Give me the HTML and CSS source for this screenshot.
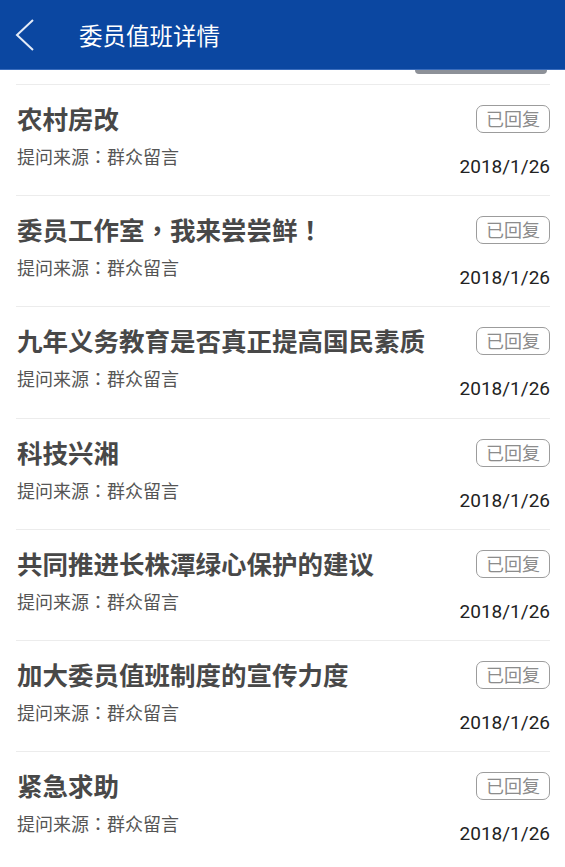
FILE: index.html
```html
<!DOCTYPE html>
<html lang="zh-CN">
<head>
  <meta charset="UTF-8" />
  <meta name="viewport" content="width=device-width, initial-scale=1" />
  <title>委员值班详情</title>
  <link rel="stylesheet" href="styles.css">
</head>
<body>
  <div class="header">
    <button type="button" class="back" onclick="history.back()">
      <svg width="22" height="34" viewBox="0 0 22 34">
        <polyline points="19,2 3,17 19,32" fill="none" stroke="#e4ebf7" stroke-width="2" />
      </svg>
    </button>
    <h1>委员值班详情</h1>
  </div>
  <div class="tab-edge"></div>

  <div class="list">
    <div class="item">
      <div class="info">
        <div class="title">农村房改</div>
        <div class="source">提问来源<span class="punct" lang="zh-TW">：</span>群众留言</div>
      </div>
      <div class="meta">
        <span class="status">已回复</span>
        <span class="date">2018/1/26</span>
      </div>
    </div>
    <div class="item">
      <div class="info">
        <div class="title">委员工作室<span class="punct" lang="zh-TW">，</span>我来尝尝鲜<span class="punct" lang="zh-TW">！</span></div>
        <div class="source">提问来源<span class="punct" lang="zh-TW">：</span>群众留言</div>
      </div>
      <div class="meta">
        <span class="status">已回复</span>
        <span class="date">2018/1/26</span>
      </div>
    </div>
    <div class="item">
      <div class="info">
        <div class="title">九年义务教育是否真正提高国民素质</div>
        <div class="source">提问来源<span class="punct" lang="zh-TW">：</span>群众留言</div>
      </div>
      <div class="meta">
        <span class="status">已回复</span>
        <span class="date">2018/1/26</span>
      </div>
    </div>
    <div class="item">
      <div class="info">
        <div class="title">科技兴湘</div>
        <div class="source">提问来源<span class="punct" lang="zh-TW">：</span>群众留言</div>
      </div>
      <div class="meta">
        <span class="status">已回复</span>
        <span class="date">2018/1/26</span>
      </div>
    </div>
    <div class="item">
      <div class="info">
        <div class="title">共同推进长株潭绿心保护的建议</div>
        <div class="source">提问来源<span class="punct" lang="zh-TW">：</span>群众留言</div>
      </div>
      <div class="meta">
        <span class="status">已回复</span>
        <span class="date">2018/1/26</span>
      </div>
    </div>
    <div class="item">
      <div class="info">
        <div class="title">加大委员值班制度的宣传力度</div>
        <div class="source">提问来源<span class="punct" lang="zh-TW">：</span>群众留言</div>
      </div>
      <div class="meta">
        <span class="status">已回复</span>
        <span class="date">2018/1/26</span>
      </div>
    </div>
    <div class="item">
      <div class="info">
        <div class="title">紧急求助</div>
        <div class="source">提问来源<span class="punct" lang="zh-TW">：</span>群众留言</div>
      </div>
      <div class="meta">
        <span class="status">已回复</span>
        <span class="date">2018/1/26</span>
      </div>
    </div>
  </div>
</body>
</html>
```

FILE: styles.css
```css
body {
  margin: 0;
  background: #fff;
  font-family: "Noto Sans CJK SC", "Noto Sans", sans-serif;
  overflow: hidden;
}
.header {
  height: 69px;
  background: #0b47a1;
  border-bottom: 1px solid #3a6dbd;
  display: flex;
  align-items: center;
}
.back {
  width: 40px;
  height: 40px;
  margin-left: 14px;
  padding: 0;
  border: none;
  background: none;
  display: flex;
  align-items: center;
}
.header h1 {
  margin: 0 0 0 25px;
  font-size: 23.5px;
  font-weight: normal;
  color: #fff;
  line-height: 30px;
}
.tab-edge {
  width: 132px;
  height: 4px;
  margin-left: 415px;
  background: #8d9198;
  border-radius: 0 0 6px 6px;
}
.list {
  margin: 10px 15px 0 16px;
  border-top: 1px solid #ececec;
}
.item {
  height: 111.2px;
  box-sizing: border-box;
  padding-top: 16px;
  border-bottom: 1px solid #ececec;
  display: flex;
  justify-content: space-between;
}
.item:last-child { border-bottom: none; }
/* centred full-width punctuation */
.punct {
  font-family: "Noto Sans CJK TC", sans-serif;
}
.title {
  font-size: 25.5px;
  line-height: 34px;
  font-weight: bold;
  color: #484848;
  padding-left: 1px;
}
.source {
  margin-top: 9px;
  font-size: 18px;
  line-height: 24px;
  color: #555;
  padding-left: 1px;
}
.meta {
  padding-top: 4px;
  display: flex;
  flex-direction: column;
  align-items: flex-end;
}
.status {
  width: 74px;
  height: 28px;
  box-sizing: border-box;
  border: 1.5px solid #9c9c9c;
  border-radius: 7px;
  font-size: 18px;
  line-height: 25px;
  color: #8c8c8c;
  text-align: center;
}
.date {
  margin-top: 22px;
  font-family: Roboto, "Liberation Sans", sans-serif;
  font-size: 19px;
  line-height: 24px;
  color: #222;
}
```
